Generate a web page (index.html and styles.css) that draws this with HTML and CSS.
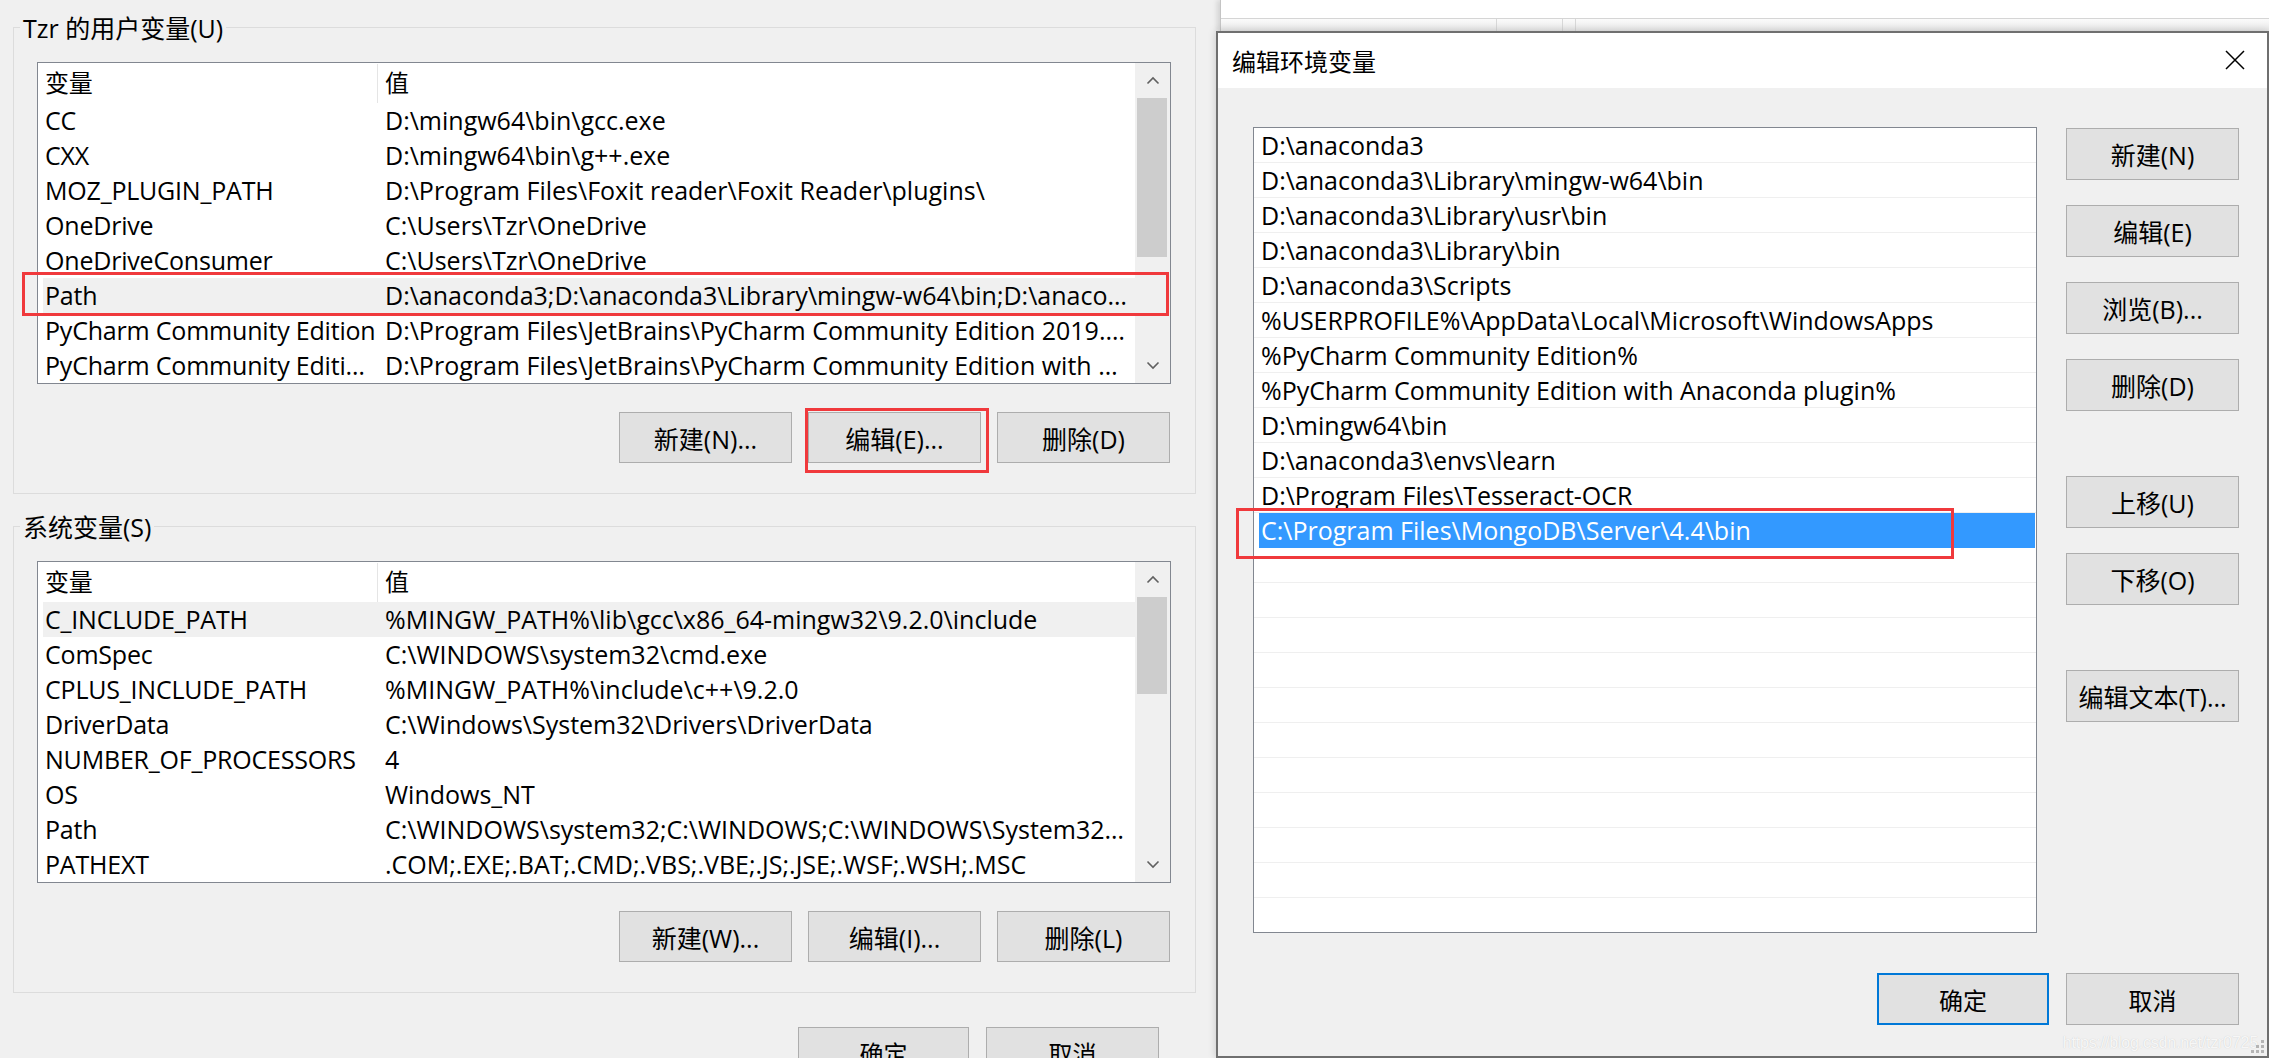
FILE: index.html
```html
<!DOCTYPE html>
<html lang="zh-CN">
<head>
<meta charset="utf-8">
<title>环境变量</title>
<link rel="stylesheet" href="styles.css">
</head>
<body>
<div class="envwin">
  <section class="group">
    <div class="gtitle">Tzr 的用户变量(U)</div>
    <div class="lv">
      <div class="lv-main">
        <div class="lv-head"><span class="c1 cjk">变量</span><span class="c2 cjk">值</span></div>
        <div class="row"><span class="c1">CC</span><span class="c2">D:\mingw64\bin\gcc.exe</span></div>
        <div class="row"><span class="c1">CXX</span><span class="c2">D:\mingw64\bin\g++.exe</span></div>
        <div class="row"><span class="c1">MOZ_PLUGIN_PATH</span><span class="c2">D:\Program Files\Foxit reader\Foxit Reader\plugins\</span></div>
        <div class="row"><span class="c1">OneDrive</span><span class="c2">C:\Users\Tzr\OneDrive</span></div>
        <div class="row"><span class="c1">OneDriveConsumer</span><span class="c2">C:\Users\Tzr\OneDrive</span></div>
        <div class="row hl"><span class="c1">Path</span><span class="c2">D:\anaconda3;D:\anaconda3\Library\mingw-w64\bin;D:\anaconda3\Library\usr\bin;D:\anaconda3\Library\bin</span></div>
        <div class="row"><span class="c1">PyCharm Community Edition</span><span class="c2">D:\Program Files\JetBrains\PyCharm Community Edition 2019.1.3\bin;</span></div>
        <div class="row"><span class="c1">PyCharm Community Edition with Anaconda plugin</span><span class="c2">D:\Program Files\JetBrains\PyCharm Community Edition with Anaconda plugin 2019.1.3\bin;</span></div>
      </div>
      <div class="sb">
        <div class="sb-btn"><svg width="14" height="9" viewBox="0 0 14 9"><polyline points="1.5,7.5 7,2 12.5,7.5" fill="none" stroke="#606060" stroke-width="1.6"/></svg></div>
        <div class="sb-thumb t1"></div>
        <div class="sb-track"></div>
        <div class="sb-btn"><svg width="14" height="9" viewBox="0 0 14 9"><polyline points="1.5,1.5 7,7 12.5,1.5" fill="none" stroke="#606060" stroke-width="1.6"/></svg></div>
      </div>
    </div>
    <div class="btnrow">
      <button class="btn">新建(N)...</button>
      <button class="btn">编辑(E)...</button>
      <button class="btn">删除(D)</button>
    </div>
  </section>

  <section class="group g2">
    <div class="gtitle">系统变量(S)</div>
    <div class="lv">
      <div class="lv-main">
        <div class="lv-head"><span class="c1 cjk">变量</span><span class="c2 cjk">值</span></div>
        <div class="row hl"><span class="c1">C_INCLUDE_PATH</span><span class="c2">%MINGW_PATH%\lib\gcc\x86_64-mingw32\9.2.0\include</span></div>
        <div class="row"><span class="c1">ComSpec</span><span class="c2">C:\WINDOWS\system32\cmd.exe</span></div>
        <div class="row"><span class="c1">CPLUS_INCLUDE_PATH</span><span class="c2">%MINGW_PATH%\include\c++\9.2.0</span></div>
        <div class="row"><span class="c1">DriverData</span><span class="c2">C:\Windows\System32\Drivers\DriverData</span></div>
        <div class="row"><span class="c1">NUMBER_OF_PROCESSORS</span><span class="c2">4</span></div>
        <div class="row"><span class="c1">OS</span><span class="c2">Windows_NT</span></div>
        <div class="row"><span class="c1">Path</span><span class="c2">C:\WINDOWS\system32;C:\WINDOWS;C:\WINDOWS\System32\Wbem;C:\WINDOWS\System32\WindowsPowerShell\v1.0\</span></div>
        <div class="row"><span class="c1">PATHEXT</span><span class="c2">.COM;.EXE;.BAT;.CMD;.VBS;.VBE;.JS;.JSE;.WSF;.WSH;.MSC</span></div>
      </div>
      <div class="sb">
        <div class="sb-btn"><svg width="14" height="9" viewBox="0 0 14 9"><polyline points="1.5,7.5 7,2 12.5,7.5" fill="none" stroke="#606060" stroke-width="1.6"/></svg></div>
        <div class="sb-thumb t2"></div>
        <div class="sb-track"></div>
        <div class="sb-btn"><svg width="14" height="9" viewBox="0 0 14 9"><polyline points="1.5,1.5 7,7 12.5,1.5" fill="none" stroke="#606060" stroke-width="1.6"/></svg></div>
      </div>
    </div>
    <div class="btnrow">
      <button class="btn">新建(W)...</button>
      <button class="btn">编辑(I)...</button>
      <button class="btn">删除(L)</button>
    </div>
  </section>

  <div class="mainbtns">
    <button class="btn w171 cjk">确定</button>
    <button class="btn cjk">取消</button>
  </div>
</div>

<div class="behind">
  <div class="behind-top"></div>
  <div class="behind-head">
    <span class="bh-col a"></span><span class="bh-col b"></span><span class="bh-col c"></span>
  </div>
</div>

<div class="dlg">
  <div class="dlg-title">
    <span class="cjk">编辑环境变量</span>
    <svg class="close" width="20" height="20" viewBox="0 0 20 20"><path d="M1 1 L19 19 M19 1 L1 19" stroke="#000" stroke-width="1.5" fill="none"/></svg>
  </div>
  <div class="dlg-body">
    <div class="dlg-main">
      <div class="plist">
        <div class="prow">D:\anaconda3</div>
        <div class="prow">D:\anaconda3\Library\mingw-w64\bin</div>
        <div class="prow">D:\anaconda3\Library\usr\bin</div>
        <div class="prow">D:\anaconda3\Library\bin</div>
        <div class="prow">D:\anaconda3\Scripts</div>
        <div class="prow">%USERPROFILE%\AppData\Local\Microsoft\WindowsApps</div>
        <div class="prow">%PyCharm Community Edition%</div>
        <div class="prow">%PyCharm Community Edition with Anaconda plugin%</div>
        <div class="prow">D:\mingw64\bin</div>
        <div class="prow">D:\anaconda3\envs\learn</div>
        <div class="prow">D:\Program Files\Tesseract-OCR</div>
        <div class="prow sel">C:\Program Files\MongoDB\Server\4.4\bin</div>
        <div class="prow"></div>
        <div class="prow"></div>
        <div class="prow"></div>
        <div class="prow"></div>
        <div class="prow"></div>
        <div class="prow"></div>
        <div class="prow"></div>
        <div class="prow"></div>
        <div class="prow"></div>
        <div class="prow"></div>
        <div class="prow"></div>
      </div>
      <div class="pbtns">
        <button class="btn pb">新建(N)</button>
        <button class="btn pb">编辑(E)</button>
        <button class="btn pb">浏览(B)...</button>
        <button class="btn pb">删除(D)</button>
        <button class="btn pb far">上移(U)</button>
        <button class="btn pb">下移(O)</button>
        <button class="btn pb far">编辑文本(T)...</button>
      </div>
    </div>
    <div class="dlg-foot">
      <button class="btn pb ok cjk">确定</button>
      <button class="btn pb cjk">取消</button>
    </div>
  </div>
  <div class="watermark">https://blog.csdn.net/tzr0725</div>
  <svg class="grip" width="16" height="16" viewBox="0 0 16 16" fill="#b4b4b4">
    <rect x="12" y="2" width="3" height="3"/>
    <rect x="7" y="7" width="3" height="3"/><rect x="12" y="7" width="3" height="3"/>
    <rect x="2" y="12" width="3" height="3"/><rect x="7" y="12" width="3" height="3"/><rect x="12" y="12" width="3" height="3"/>
  </svg>
</div>

<div class="mark m1"></div>
<div class="mark m2"></div>
<div class="mark m3"></div>
</body>
</html>
```

FILE: styles.css
```css
html, body {
  margin: 0;
  padding: 0;
}
body {
  width: 2269px;
  height: 1058px;
  overflow: hidden;
  position: relative;
  background: #f0f0f0;
  font-family: "Open Sans", "Noto Sans CJK SC", sans-serif;
  font-size: 25px;
  color: #000;
}
.cjk {
  font-size: 24px;
}

/* ---------- left window ---------- */
.envwin {
  padding: 27px 0 0 13px;
  width: 1183px;
}
.group {
  width: 1183px;
  box-sizing: border-box;
  border: 1px solid #dcdcdc;
  padding: 0 24px 30px 23px;
}
.group.g2 {
  margin-top: 32px;
}
.gtitle {
  display: table;
  margin: -17px 0 0 -17px;
  padding: 0 3px;
  height: 34px;
  line-height: 34px;
  background: #f0f0f0;
  white-space: nowrap;
}
.lv {
  margin-top: 17px;
  display: flex;
  width: 1134px;
  box-sizing: border-box;
  border: 1px solid #828790;
  background: #fff;
}
.lv-main {
  flex: 1;
  min-width: 0;
  padding-left: 5px;
}
.lv-head {
  display: flex;
  height: 40px;
  line-height: 40px;
}
.lv-head .c1 {
  border-right: 1px solid #e5e5e5;
  margin-top: 1px;
  line-height: 38px;
}
.row {
  display: flex;
  height: 35px;
  line-height: 35px;
}
.row.hl {
  background: #f0f0f0;
}
.c1 {
  flex: none;
  width: 335px;
  box-sizing: border-box;
  padding: 0 1px 0 2px;
  letter-spacing: -0.2px;
  overflow: hidden;
  white-space: nowrap;
  text-overflow: ellipsis;
}
.c2 {
  flex: 1;
  min-width: 0;
  padding: 0 8px 0 7px;
  overflow: hidden;
  white-space: nowrap;
  text-overflow: ellipsis;
}
.sb {
  width: 35px;
  flex: none;
  background: #f0f0f0;
  display: flex;
  flex-direction: column;
}
.sb-btn {
  height: 35px;
  display: flex;
  align-items: center;
  justify-content: center;
}
.sb-thumb {
  margin: 0 3px 0 2px;
  background: #cdcdcd;
}
.sb-thumb.t1 { height: 159px; }
.sb-thumb.t2 { height: 97px; }
.sb-track { flex: 1; }

.btn {
  font-family: inherit;
  font-size: 25px;
  color: #000;
  background: #e1e1e1;
  border: 1px solid #adadad;
  box-sizing: border-box;
  width: 173px;
  height: 51px;
  padding: 0;
  margin: 0;
  white-space: nowrap;
}
.btn.cjk { font-size: 24px; }
.btnrow {
  margin-top: 28px;
  display: flex;
  justify-content: flex-end;
  gap: 16px;
  padding-right: 1px;
}
.mainbtns {
  margin-top: 34px;
  display: flex;
  justify-content: flex-end;
  gap: 17px;
  padding-right: 37px;
}
.btn.w171 { width: 171px; }

/* ---------- window behind the dialog ---------- */
.behind {
  position: absolute;
  left: 1220px;
  top: 0;
  right: 0;
  height: 31px;
  background: #fff;
  border-left: 1px solid #c4c4c4;
  box-shadow: -3px 0 5px rgba(0, 0, 0, 0.12);
}
.behind-top {
  height: 18px;
  border-bottom: 1px solid #d5d5d5;
}
.behind-head {
  height: 12px;
  background: linear-gradient(#fbfbfb, #e9e9e9);
  display: flex;
}
.bh-col {
  display: block;
  border-right: 1px solid #d8d8d8;
}
.bh-col.a { width: 275px; }
.bh-col.b { width: 65px; }
.bh-col.c { width: 12px; }

/* ---------- dialog ---------- */
.dlg {
  position: absolute;
  left: 1216px;
  top: 31px;
  width: 1053px;
  height: 1027px;
  box-sizing: border-box;
  border: 2px solid #6f6f6f;
  background: #f0f0f0;
  display: flex;
  flex-direction: column;
  box-shadow: 0 0 8px rgba(0, 0, 0, 0.18);
}
.dlg-title {
  height: 55px;
  flex: none;
  background: #fff;
  display: flex;
  align-items: center;
  justify-content: space-between;
  padding: 0 22px 0 14px;
}
.close { display: block; margin-top: -2px; }
.dlg-body {
  flex: 1;
  display: flex;
  flex-direction: column;
  padding: 39px 28px 31px 35px;
}
.dlg-main {
  display: flex;
  gap: 29px;
}
.plist {
  width: 784px;
  height: 806px;
  box-sizing: border-box;
  border: 1px solid #828790;
  background: #fff;
  overflow: hidden;
}
.prow {
  height: 35px;
  box-sizing: border-box;
  border-bottom: 1px solid #efefef;
  line-height: 34px;
  padding-left: 7px;
  white-space: nowrap;
}
.prow.sel {
  margin: 0 1px 0 5px;
  padding-left: 2px;
  background: #3399ff;
  color: #fff;
  border-bottom-color: #3399ff;
}
.pbtns {
  display: flex;
  flex-direction: column;
  gap: 25px;
  padding-top: 1px;
}
.btn.pb { height: 52px; }
.btn.far { margin-top: 40px; }
.dlg-foot {
  margin-top: auto;
  display: flex;
  justify-content: flex-end;
  gap: 17px;
}
.btn.ok {
  width: 172px;
  border: 2px solid #0078d7;
}
.watermark {
  position: absolute;
  right: 9px;
  bottom: 4px;
  font-family: "Liberation Sans", Arial, sans-serif;
  font-size: 16px;
  color: rgba(255, 255, 255, 0.85);
  text-shadow: 0 0 1px rgba(0, 0, 0, 0.18);
  letter-spacing: -0.2px;
}
.grip {
  position: absolute;
  right: 2px;
  bottom: 2px;
}

/* ---------- red annotation boxes ---------- */
.mark {
  position: absolute;
  border: 3px solid #f0393c;
  box-sizing: border-box;
}
.mark.m1 { left: 22px; top: 272px; width: 1147px; height: 44px; }
.mark.m2 { left: 805px; top: 408px; width: 184px; height: 65px; }
.mark.m3 { left: 1236px; top: 508px; width: 718px; height: 51px; }
```
